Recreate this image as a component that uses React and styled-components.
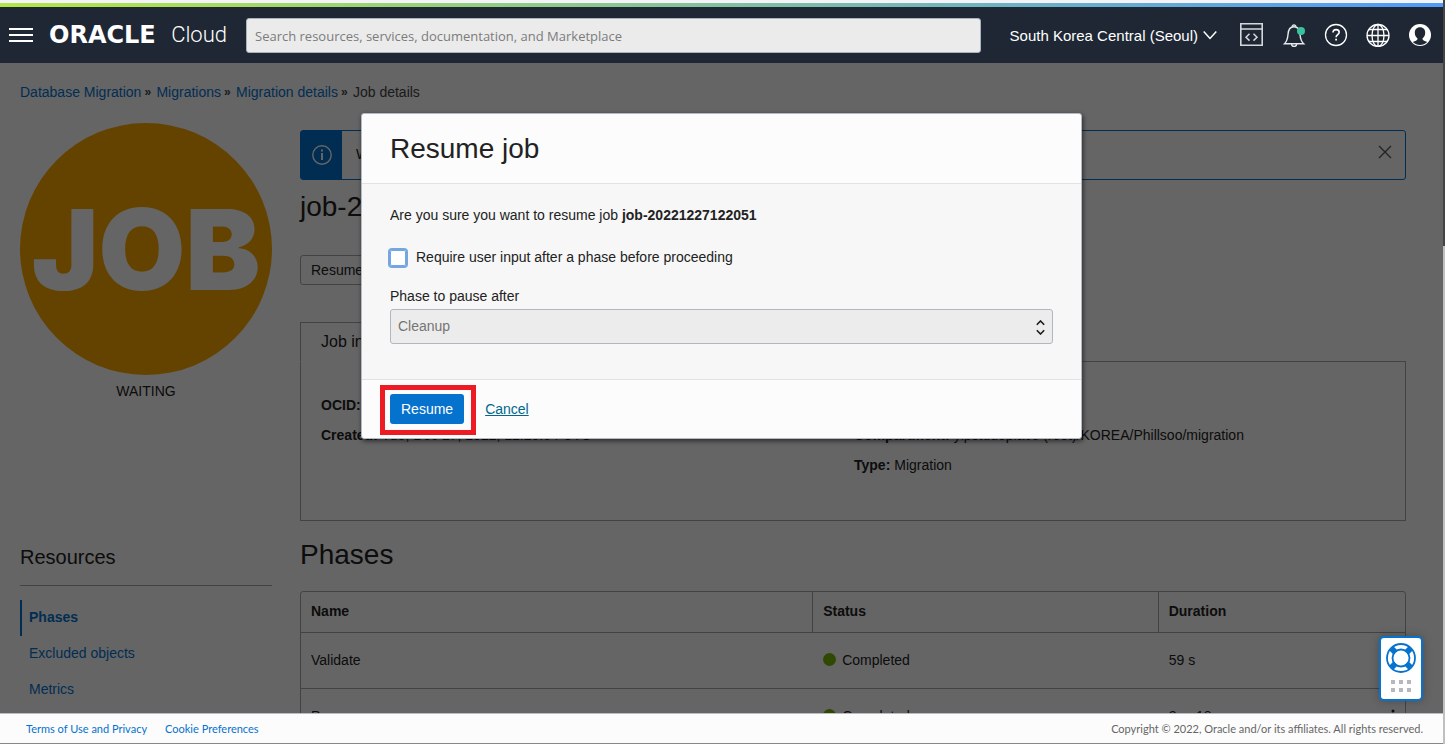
import React from "react";
import styled, { createGlobalStyle } from "styled-components";

const sans = `"Liberation Sans", Arial, sans-serif`;
const humanist = `"Open Sans", "Noto Sans", sans-serif`;
const blue = "#0572ce";
const line = "#a4abb2";

const Global = createGlobalStyle`
  *, *::before, *::after { box-sizing: border-box; }
  body { margin: 0; overflow: hidden; background: #fcfcfc; font: 14px/20px ${sans}; color: #222; }
  h1, h2, h3, p, ul, dl, dd { margin: 0; padding: 0; font-weight: 400; }
  button, input, select { font-family: inherit; }
  svg { display: block; }
`;

const Screen = styled.div`
  display: flex;
  height: 100vh;
`;
const Frame = styled.div`
  flex: 1;
  min-width: 0;
  display: flex;
  flex-direction: column;
  border-bottom: 1px solid #888;
`;
const ScrollTrack = styled.div`
  width: 2px;
  background: #c0c0c0;
`;
const ScrollThumb = styled.div`
  height: 33%;
  background: #444446;
`;
const Rainbow = styled.div`
  flex: none;
  height: 7px;
  border-top: 3px solid #f4f3f8;
  background: linear-gradient(90deg, #b4e645, #4f9bf8);
`;

const Header = styled.header`
  flex: none;
  height: 56px;
  display: flex;
  align-items: center;
  padding: 0 11px 0 9px;
  background: #1e2733;
  color: #fff;
`;
const IconButton = styled.button`
  display: block;
  flex: none;
  border: 0;
  padding: 0;
  background: none;
  color: inherit;
  cursor: pointer;
`;
const Brand = styled.a`
  flex: none;
  display: flex;
  align-items: center;
  justify-content: space-between;
  width: 178px;
  margin: 0 19px 0 16px;
  line-height: 24px;
  color: #fff;
  text-decoration: none;
`;
const BrandName = styled.span`
  font: 700 24px/24px "DejaVu Sans", sans-serif;
`;
const BrandProduct = styled.span`
  font: 300 22px/24px Roboto, sans-serif;
`;
const Search = styled.input`
  flex: 1;
  min-width: 0;
  height: 35px;
  padding: 2px 8px 0;
  border: 1px solid #a9b3bc;
  border-radius: 3px;
  background: #ebebeb;
  && { font-family: ${humanist}; }
  font-size: 13px;
  &::placeholder { color: #7c7c7c; opacity: 1; }
`;
const Region = styled.button`
  display: flex;
  align-items: center;
  gap: 5px;
  margin: 0 23px 0 29px;
  padding: 0;
  border: 0;
  background: none;
  color: #fff;
  font-size: 15px;
  white-space: nowrap;
`;
const HeaderIcons = styled.div`
  display: flex;
  gap: 18px;
`;

const Content = styled.div`
  flex: 1;
  min-height: 0;
  position: relative;
  overflow: hidden;
`;
const Page = styled.main`
  padding: 19px 37px 0 20px;
`;
const Crumbs = styled.nav`
  display: flex;
  color: #444;
  a { color: ${blue}; text-decoration: none; }
`;
const Separator = styled.span`
  width: 15px;
  padding-left: 3px;
  font-size: 12px;
  font-weight: 700;
`;
const Columns = styled.div`
  display: flex;
  align-items: flex-start;
  gap: 28px;
`;
const Side = styled.aside`
  flex: none;
  width: 252px;
  padding-top: 21px;
`;
const JobBadge = styled.div`
  display: flex;
  align-items: center;
  justify-content: center;
  height: 252px;
  border-radius: 50%;
  background: #f9a700;
  color: #fcfcfc;
  font: 900 112px/252px Inter, sans-serif;
`;
const State = styled.p`
  margin-top: 6px;
  text-align: center;
`;
const SideTitle = styled.h3`
  margin: 144px 0 14px;
  padding-bottom: 16px;
  border-bottom: 1px solid ${line};
  font-size: 20px;
  line-height: 24px;
`;
const SideLink = styled.a`
  display: block;
  height: 36px;
  padding-left: 7px;
  border-left: 2px solid ${(p) => (p.$active ? blue : "transparent")};
  color: ${blue};
  font-weight: ${(p) => (p.$active ? 700 : 400)};
  line-height: 34px;
  text-decoration: none;
`;

const Main = styled.section`
  flex: 1;
  min-width: 0;
  padding-top: 28px;
`;
const Banner = styled.div`
  display: flex;
  height: 50px;
  border: 1px solid ${blue};
  border-radius: 3px;
  line-height: 46px;
`;
const BannerIcon = styled.div`
  display: flex;
  align-items: center;
  justify-content: center;
  width: 41px;
  background: ${blue};
`;
const BannerText = styled.p`
  flex: 1;
  padding-left: 14px;
`;
const BannerClose = styled(IconButton)`
  align-self: flex-start;
  margin: 14px 13px 0 0;
`;
const Title = styled.h1`
  margin-top: ${(p) => p.$top || 0}px;
  font-size: 28px;
  line-height: 36px;
`;
const PlainButton = styled.button`
  height: 30px;
  margin-top: 30px;
  padding: 0 10px;
  border: 1px solid ${line};
  border-radius: 3px;
  background: none;
  color: #222;
  font-size: 14px;
`;
const Tab = styled.button`
  display: block;
  height: 40px;
  margin: 37px 0 -1px;
  padding: 0 20px;
  border: 1px solid ${line};
  border-bottom-color: #fcfcfc;
  background: #fcfcfc;
  color: #222;
  font-size: 16px;
  position: relative;
`;
const Details = styled.dl`
  display: grid;
  grid-template-columns: 533fr 531fr;
  grid-auto-rows: 30px;
  height: 160px;
  padding: 28px 20px 0;
  border: 1px solid ${line};
  line-height: 30px;
  white-space: nowrap;
`;
const Detail = styled.div`
  grid-column: ${(p) => p.$col};
  grid-row: ${(p) => p.$row};
  display: flex;
  gap: 4px;
  dt { font-weight: 700; }
`;
const Table = styled.table`
  width: 100%;
  margin-top: 18px;
  table-layout: fixed;
  border-collapse: separate;
  border-spacing: 0;
  border: 1px solid ${line};
  border-radius: 3px;
  th, td { padding: 0 10px 2px; text-align: left; border-bottom: 1px solid ${line}; }
  th { height: 41px; }
  th + th { border-left: 1px solid ${line}; }
  td { height: 56px; }
  td + td { padding-left: 11px; }
`;
const Col = styled.col`
  width: ${(p) => p.$w};
`;
const Status = styled.span`
  display: flex;
  align-items: center;
  gap: 6px;
  &::before {
    content: "";
    width: 13px;
    height: 13px;
    border-radius: 50%;
    background: #76b900;
  }
`;
const DurationCell = styled.div`
  display: flex;
  justify-content: space-between;
  align-items: center;
`;

const Shade = styled.div`
  position: absolute;
  inset: 0;
  display: flex;
  align-items: flex-start;
  justify-content: center;
  padding-top: 50px;
  background: rgba(0, 0, 0, 0.6);
`;
const Dialog = styled.div`
  width: 721px;
  max-width: 100%;
  border: 1px solid #b4b9c2;
  border-radius: 3px;
  background: #fcfcfc;
  box-shadow: 1px 2px 5px rgba(0, 0, 0, 0.6);
`;
const DialogHeader = styled.div`
  padding: 17px 28px 16px;
  h2 { font-size: 28px; line-height: 36px; }
`;
const DialogBody = styled.div`
  padding: 21px 28px 35px;
  border: solid #e2e2e4;
  border-width: 1px 0;
  background: #f7f7f7;
`;
const CheckRow = styled.label`
  display: flex;
  align-items: center;
  gap: 10px;
  margin: 22px 0 19px;
`;
const CheckBox = styled.input`
  appearance: none;
  width: 16px;
  height: 16px;
  margin: 2px 0 0;
  border-radius: 2px;
  background: #fff;
  box-shadow: inset 0 0 0 1px #76a6e0, 0 0 0 2px #76a6e0;
`;
const FieldLabel = styled.label`
  display: block;
  margin-bottom: 3px;
`;
const SelectWrap = styled.div`
  position: relative;
  svg { position: absolute; right: 8px; top: 11px; pointer-events: none; }
`;
const Select = styled.select`
  display: block;
  appearance: none;
  width: 100%;
  height: 35px;
  padding: 0 7px 2px;
  border: 1px solid #b1b7c0;
  border-radius: 3px;
  background: #ececec;
  color: #757575;
  font-size: 14px;
  opacity: 1;
`;
const DialogFooter = styled.div`
  display: flex;
  align-items: center;
  gap: 21px;
  height: 58px;
  padding: 0 28px;
  a { color: #00688c; }
`;
const Highlight = styled.div`
  position: relative;
  &::after {
    content: "";
    position: absolute;
    inset: -9px -12px -11px -10px;
    border: 5px solid #ed1c24;
    pointer-events: none;
  }
`;
const PrimaryButton = styled.button`
  display: block;
  height: 30px;
  padding: 0 11px;
  border: 0;
  border-radius: 3px;
  background: ${blue};
  color: #fff;
  font-size: 14px;
`;

const Help = styled.button`
  position: absolute;
  right: 20px;
  bottom: 12px;
  width: 44px;
  height: 65px;
  padding: 0;
  border: 2px solid ${blue};
  border-radius: 5px;
  background: #fff;
  box-shadow: 0 0 10px rgba(0, 0, 0, 0.25);
`;

const Footer = styled.footer`
  flex: none;
  display: flex;
  align-items: center;
  gap: 18px;
  height: 30px;
  padding: 0 20px 0 26px;
  border-top: 1px solid #bdbac4;
  background: #fcfcfc;
  color: #666;
  font: 11px/16px Lato, sans-serif;
  a { color: ${blue}; text-decoration: none; }
`;
const Copyright = styled.span`
  margin-left: auto;
`;

const Icon = ({ size = 24, h, children, ...rest }) => (
  <svg width={size} height={h || size} viewBox={`0 0 ${size} ${h || size}`} fill="none" stroke="currentColor" aria-hidden="true" {...rest}>
    {children}
  </svg>
);

const phases = [
  ["Validate", "Completed", "59 s"],
  ["Prepare", "Completed", "2 m 18 s"],
];

export default function App() {
  return (
    <Screen>
      <Global />
      <Frame>
        <Rainbow />
        <Header>
          <IconButton aria-label="Menu">
            <Icon strokeWidth="2"><path d="M0 6h24M0 12h24M0 18h24" /></Icon>
          </IconButton>
          <Brand href="#home">
            <BrandName>ORACLE</BrandName>
            <BrandProduct>Cloud</BrandProduct>
          </Brand>
          <Search type="search" aria-label="Search" placeholder="Search resources, services, documentation, and Marketplace" />
          <Region>
            South Korea Central (Seoul)
            <Icon size={14} strokeWidth="1.5"><path d="M.7 3.5 7 10.5l6.3-7" /></Icon>
          </Region>
          <HeaderIcons>
            <IconButton aria-label="Developer tools">
              <Icon stroke="#d3d9da">
                <path strokeWidth="1.6" d="M.8.8h21.4v21.4H.8zM1 6h21" />
                <path strokeWidth="1.5" d="m9.500 10.800-3.500 3.400 3.500 3.400M13.500 10.800l3.500 3.400-3.500 3.400" />
              </Icon>
            </IconButton>
            <IconButton aria-label="Notifications">
              <Icon stroke="#e6eaec" strokeWidth="1.4">
                <path d="M2.500 20.800h19.200c-2.400-2.300-3.300-4.500-3.700-9.300C17.700 6.300 15.600 3.800 12 3.800S6.300 6.300 6 11.500c-.4 4.800-1.200 7-3.500 9.300z" />
                <path d="M10.200 3.700a1.800 1.800 0 1 1 3.600 0M9.600 21a2.500 2.500 0 0 0 5 0" />
                <circle cx="19" cy="8" r="4" fill="#3ac1a0" stroke="none" />
              </Icon>
            </IconButton>
            <IconButton aria-label="Help">
              <Icon strokeWidth="1.3">
                <circle cx="12" cy="12" r="10.500" />
                <path strokeWidth="1.600" d="M9 9.600c0-2 1.200-3 3.100-3 1.800 0 3.100 1 3.100 2.700 0 2.200-3.100 2.500-3.100 4.900" />
                <path strokeWidth="1.800" d="M12.100 15.700v1.900" />
              </Icon>
            </IconButton>
            <IconButton aria-label="Language">
              <Icon strokeWidth="1.3">
                <circle cx="12" cy="12.500" r="11" />
                <ellipse cx="12" cy="12.500" rx="6" ry="11" />
                <path d="M12 1.500v22M1 12.500h22M3 6.500h18M3 18.500h18" />
              </Icon>
            </IconButton>
            <IconButton aria-label="Profile">
              <Icon stroke="none">
                <circle cx="12" cy="12" r="11" fill="#fff" />
                <path fill="#1e2733" d="M12 4.200c-3.300 0-5.200 2.300-5.200 5.500 0 2.400 1 4.400 2.600 5.600.2 1.300-.3 1.900-1.500 2.400l-3.100 1.400c4 3.900 10.400 3.900 14.400 0l-3.100-1.400c-1.200-.5-1.700-1.100-1.500-2.400 1.600-1.200 2.600-3.200 2.600-5.600 0-3.200-1.900-5.500-5.200-5.500z" />
              </Icon>
            </IconButton>
          </HeaderIcons>
        </Header>

        <Content>
          <Page>
            <Crumbs aria-label="Breadcrumb">
              <a href="#dm">Database Migration</a><Separator>»</Separator>
              <a href="#migrations">Migrations</a><Separator>»</Separator>
              <a href="#details">Migration details</a><Separator>»</Separator>
              <span>Job details</span>
            </Crumbs>
            <Columns>
              <Side>
                <JobBadge>JOB</JobBadge>
                <State>WAITING</State>
                <SideTitle>Resources</SideTitle>
                <SideLink href="#phases" $active>Phases</SideLink>
                <SideLink href="#excluded">Excluded objects</SideLink>
                <SideLink href="#metrics">Metrics</SideLink>
              </Side>
              <Main>
                <Banner>
                  <BannerIcon>
                    <Icon size={20} stroke="#fcfcfc" strokeWidth="1.4">
                      <circle cx="10" cy="10" r="9.200" />
                      <path strokeWidth="2" d="M10 4.500v2M10 8v7" />
                    </Icon>
                  </BannerIcon>
                  <BannerText>Waiting</BannerText>
                  <BannerClose aria-label="Dismiss">
                    <Icon size={14} stroke="#555" strokeWidth="1.300"><path d="m1 1 12 12M13 1 1 13" /></Icon>
                  </BannerClose>
                </Banner>
                <Title $top={9}>job-20221227122051</Title>
                <PlainButton>Resume</PlainButton>
                <Tab>Job information</Tab>
                <Details>
                  <Detail $col={1} $row={1}><dt>OCID:</dt></Detail>
                  <Detail $col={1} $row={2}><dt>Created:</dt><dd>Tue, Dec 27, 2022, 12:20:54 UTC</dd></Detail>
                  <Detail $col={2} $row={2}><dt>Compartment:</dt><dd>yipstudoplace (root)/KOREA/Phillsoo/migration</dd></Detail>
                  <Detail $col={2} $row={3}><dt>Type:</dt><dd>Migration</dd></Detail>
                </Details>
                <Title as="h2" $top={16}>Phases</Title>
                <Table>
                  <colgroup><Col $w="46.3%" /><Col $w="31.3%" /><Col /></colgroup>
                  <thead>
                    <tr><th>Name</th><th>Status</th><th>Duration</th></tr>
                  </thead>
                  <tbody>
                    {phases.map(([name, status, duration], i) => (
                      <tr key={name}>
                        <td>{name}</td>
                        <td><Status>{status}</Status></td>
                        <td>
                          <DurationCell>
                            {duration}
                            {i > 0 && (
                              <IconButton aria-label="Actions">
                                <Icon size={4} h={14} stroke="none" fill="#222">
                                  <circle cx="2" cy="2" r="1.500" /><circle cx="2" cy="7" r="1.500" /><circle cx="2" cy="12" r="1.500" />
                                </Icon>
                              </IconButton>
                            )}
                          </DurationCell>
                        </td>
                      </tr>
                    ))}
                  </tbody>
                </Table>
              </Main>
            </Columns>
          </Page>

          <Shade>
            <Dialog role="dialog" aria-labelledby="dialog-title">
              <DialogHeader><h2 id="dialog-title">Resume job</h2></DialogHeader>
              <DialogBody>
                <p>Are you sure you want to resume job <b>job-20221227122051</b></p>
                <CheckRow>
                  <CheckBox type="checkbox" />
                  Require user input after a phase before proceeding
                </CheckRow>
                <FieldLabel htmlFor="phase">Phase to pause after</FieldLabel>
                <SelectWrap>
                  <Select id="phase" disabled defaultValue="Cleanup"><option>Cleanup</option></Select>
                  <Icon size={9} h={15} stroke="#1a1a1a" strokeWidth="1.600"><path d="m.8 4.700 3.700-3.700 3.700 3.700M.8 10.300 4.500 14l3.700-3.700" /></Icon>
                </SelectWrap>
              </DialogBody>
              <DialogFooter>
                <Highlight><PrimaryButton>Resume</PrimaryButton></Highlight>
                <a href="#cancel">Cancel</a>
              </DialogFooter>
            </Dialog>
          </Shade>

          <Help aria-label="Support">
            <Icon size={40} h={61} stroke={blue}>
              <circle cx="20" cy="20" r="14" strokeWidth="1.800" />
              <circle cx="20" cy="20" r="8.500" strokeWidth="1.800" />
              <path strokeWidth="6" d="m10.500 10.500 4 4M29.500 10.500l-4 4M10.500 29.500l4-4M29.500 29.500l-4-4" />
              <g fill="#b4b9be" stroke="none">
                {[10, 18, 26].map((x) => [42, 50].map((y) => <rect key={`${x}-${y}`} x={x} y={y} width="4" height="4" />))}
              </g>
            </Icon>
          </Help>
        </Content>

        <Footer>
          <a href="#terms">Terms of Use and Privacy</a>
          <a href="#cookies">Cookie Preferences</a>
          <Copyright>Copyright © 2022, Oracle and/or its affiliates. All rights reserved.</Copyright>
        </Footer>
      </Frame>
      <ScrollTrack><ScrollThumb /></ScrollTrack>
    </Screen>
  );
}
